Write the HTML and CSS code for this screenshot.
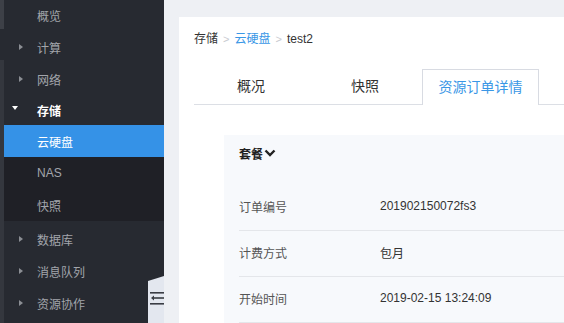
FILE: index.html
```html
<!DOCTYPE html>
<html lang="zh">
<head>
  <meta charset="UTF-8">
  <title>云硬盘 - test2</title>
  <link rel="stylesheet" href="styles.css">
</head>
<body>
  <div class="scroll-strip"><div class="scroll-thumb"></div></div>

  <nav class="sidebar">
    <ul class="menu">
      <li class="menu-item"><span class="caret"></span>概览</li>
      <li class="menu-item"><span class="caret"><i class="tri-right"></i></span>计算</li>
      <li class="menu-item"><span class="caret"><i class="tri-right"></i></span>网络</li>
      <li class="menu-item open"><span class="caret"><i class="tri-down"></i></span>存储</li>
      <li>
        <ul class="submenu">
          <li class="menu-item active"><span class="caret"></span>云硬盘</li>
          <li class="menu-item"><span class="caret"></span>NAS</li>
          <li class="menu-item"><span class="caret"></span>快照</li>
        </ul>
      </li>
      <li class="menu-item after-sub"><span class="caret"><i class="tri-right"></i></span>数据库</li>
      <li class="menu-item"><span class="caret"><i class="tri-right"></i></span>消息队列</li>
      <li class="menu-item"><span class="caret"><i class="tri-right"></i></span>资源协作</li>
    </ul>
    <div class="collapse-tab">
      <svg width="16" height="18" viewBox="0 0 16 18">
        <rect x="2" y="3" width="14" height="1.6" fill="#3a3d44"/>
        <polygon points="3,9 6,6.5 6,11.5" fill="#3a3d44"/>
        <rect x="6" y="8.2" width="10" height="1.6" fill="#3a3d44"/>
        <rect x="2" y="14" width="14" height="1.6" fill="#3a3d44"/>
      </svg>
    </div>
  </nav>

  <main class="main">
    <div class="card">
      <div class="breadcrumb">
        <span>存储</span><span class="sep">&gt;</span><a class="crumb-link">云硬盘</a><span class="sep">&gt;</span><span>test2</span>
      </div>

      <div class="tabs">
        <div class="tab">概况</div>
        <div class="tab">快照</div>
        <div class="tab active">资源订单详情</div>
      </div>

      <section class="panel">
        <div class="panel-title">
          套餐
          <svg class="chevron" width="12" height="10" viewBox="0 0 12 10">
            <polyline points="1.5,2.5 6,7 10.5,2.5" fill="none" stroke="#222" stroke-width="2.4"/>
          </svg>
        </div>
        <div class="rows">
          <div class="row"><span class="label">订单编号</span><span class="value">201902150072fs3</span></div>
          <div class="row"><span class="label">计费方式</span><span class="value">包月</span></div>
          <div class="row"><span class="label">开始时间</span><span class="value">2019-02-15 13:24:09</span></div>
        </div>
      </section>
    </div>
  </main>
</body>
</html>
```

FILE: styles.css
```css
html, body {
  height: 100%;
}
body {
  margin: 0;
  display: flex;
  overflow: hidden;
  font-family: "Liberation Sans", "Noto Sans CJK SC", sans-serif;
  font-size: 12px;
  color: #333;
  background-color: #eef0f4;
}
ul {
  list-style: none;
  margin: 0;
  padding: 0;
}

.scroll-strip {
  width: 4px;
  flex-shrink: 0;
  background-color: #34373e;
}
.scroll-thumb {
  height: 29px;
  background-color: #3d4047;
  border-bottom: 31px solid #272a31;
}

.sidebar {
  width: 160px;
  flex-shrink: 0;
  background-color: #272a31;
  position: relative;
}
.menu {
  margin-top: -1px;
}
.menu-item {
  display: flex;
  align-items: center;
  height: 32px;
  color: #a2a5ab;
}
.menu-item.open {
  height: 30px;
  color: #fff;
  font-weight: bold;
}
.caret {
  width: 33px;
  flex-shrink: 0;
  display: flex;
  align-items: center;
  padding-left: 15px;
  box-sizing: border-box;
}
.open .caret {
  padding-left: 8px;
}
.tri-right {
  width: 0;
  height: 0;
  border-top: 3px solid transparent;
  border-bottom: 3px solid transparent;
  border-left: 4px solid #8b8e94;
}
.tri-down {
  width: 0;
  height: 0;
  border-left: 3.5px solid transparent;
  border-right: 3.5px solid transparent;
  border-top: 4px solid #fff;
  margin-top: -4px;
}
.submenu {
  background-color: #1f2026;
}
.menu-item.active {
  background-color: #3592e7;
  color: #fff;
}
.after-sub {
  margin-top: 2px;
}

.collapse-tab {
  position: absolute;
  right: 0;
  top: 276px;
  width: 16px;
  height: 60px;
  background-color: #e3e7ef;
  clip-path: polygon(0 5px, 100% 0, 100% 100%, 0 100%);
  padding-top: 13px;
  box-sizing: border-box;
}
.collapse-tab svg {
  display: block;
}

.main {
  flex: 1;
  display: flex;
  padding: 17px 0 0 15px;
  min-width: 0;
}
.card {
  flex: 1;
  background-color: #fff;
  padding: 13px 0 0 15px;
}
.breadcrumb {
  height: 18px;
  line-height: 18px;
  color: #333;
}
.sep {
  color: #c8cad0;
  margin: 0 5px;
  font-size: 11px;
}
.crumb-link {
  color: #3a97e6;
}

.tabs {
  display: flex;
  margin-top: 21px;
  border-bottom: 1px solid #dcdfe5;
  height: 35px;
}
.tab {
  width: 114px;
  height: 35px;
  line-height: 35px;
  text-align: center;
  font-size: 14px;
  color: #333;
}
.tab.active {
  width: 117px;
  box-sizing: border-box;
  height: 36px;
  border: 1px solid #d8dbe2;
  border-bottom: none;
  background-color: #fff;
  color: #3a97e6;
  line-height: 34px;
}

.panel {
  margin: 30px 0 0 30px;
  background-color: #f7f9fc;
  padding: 0 0 20px 15px;
}
.panel-title {
  display: flex;
  align-items: center;
  height: 36px;
  font-weight: bold;
  font-size: 12px;
  color: #222;
}
.chevron {
  margin-left: 1px;
}
.rows {
  margin-top: 14px;
}
.row {
  display: flex;
  align-items: center;
  padding-bottom: 3px;
  box-sizing: border-box;
  height: 46px;
  border-bottom: 1px solid #e4e6ea;
}
.label {
  width: 141px;
  color: #555;
}
.value {
  color: #333;
}
```
